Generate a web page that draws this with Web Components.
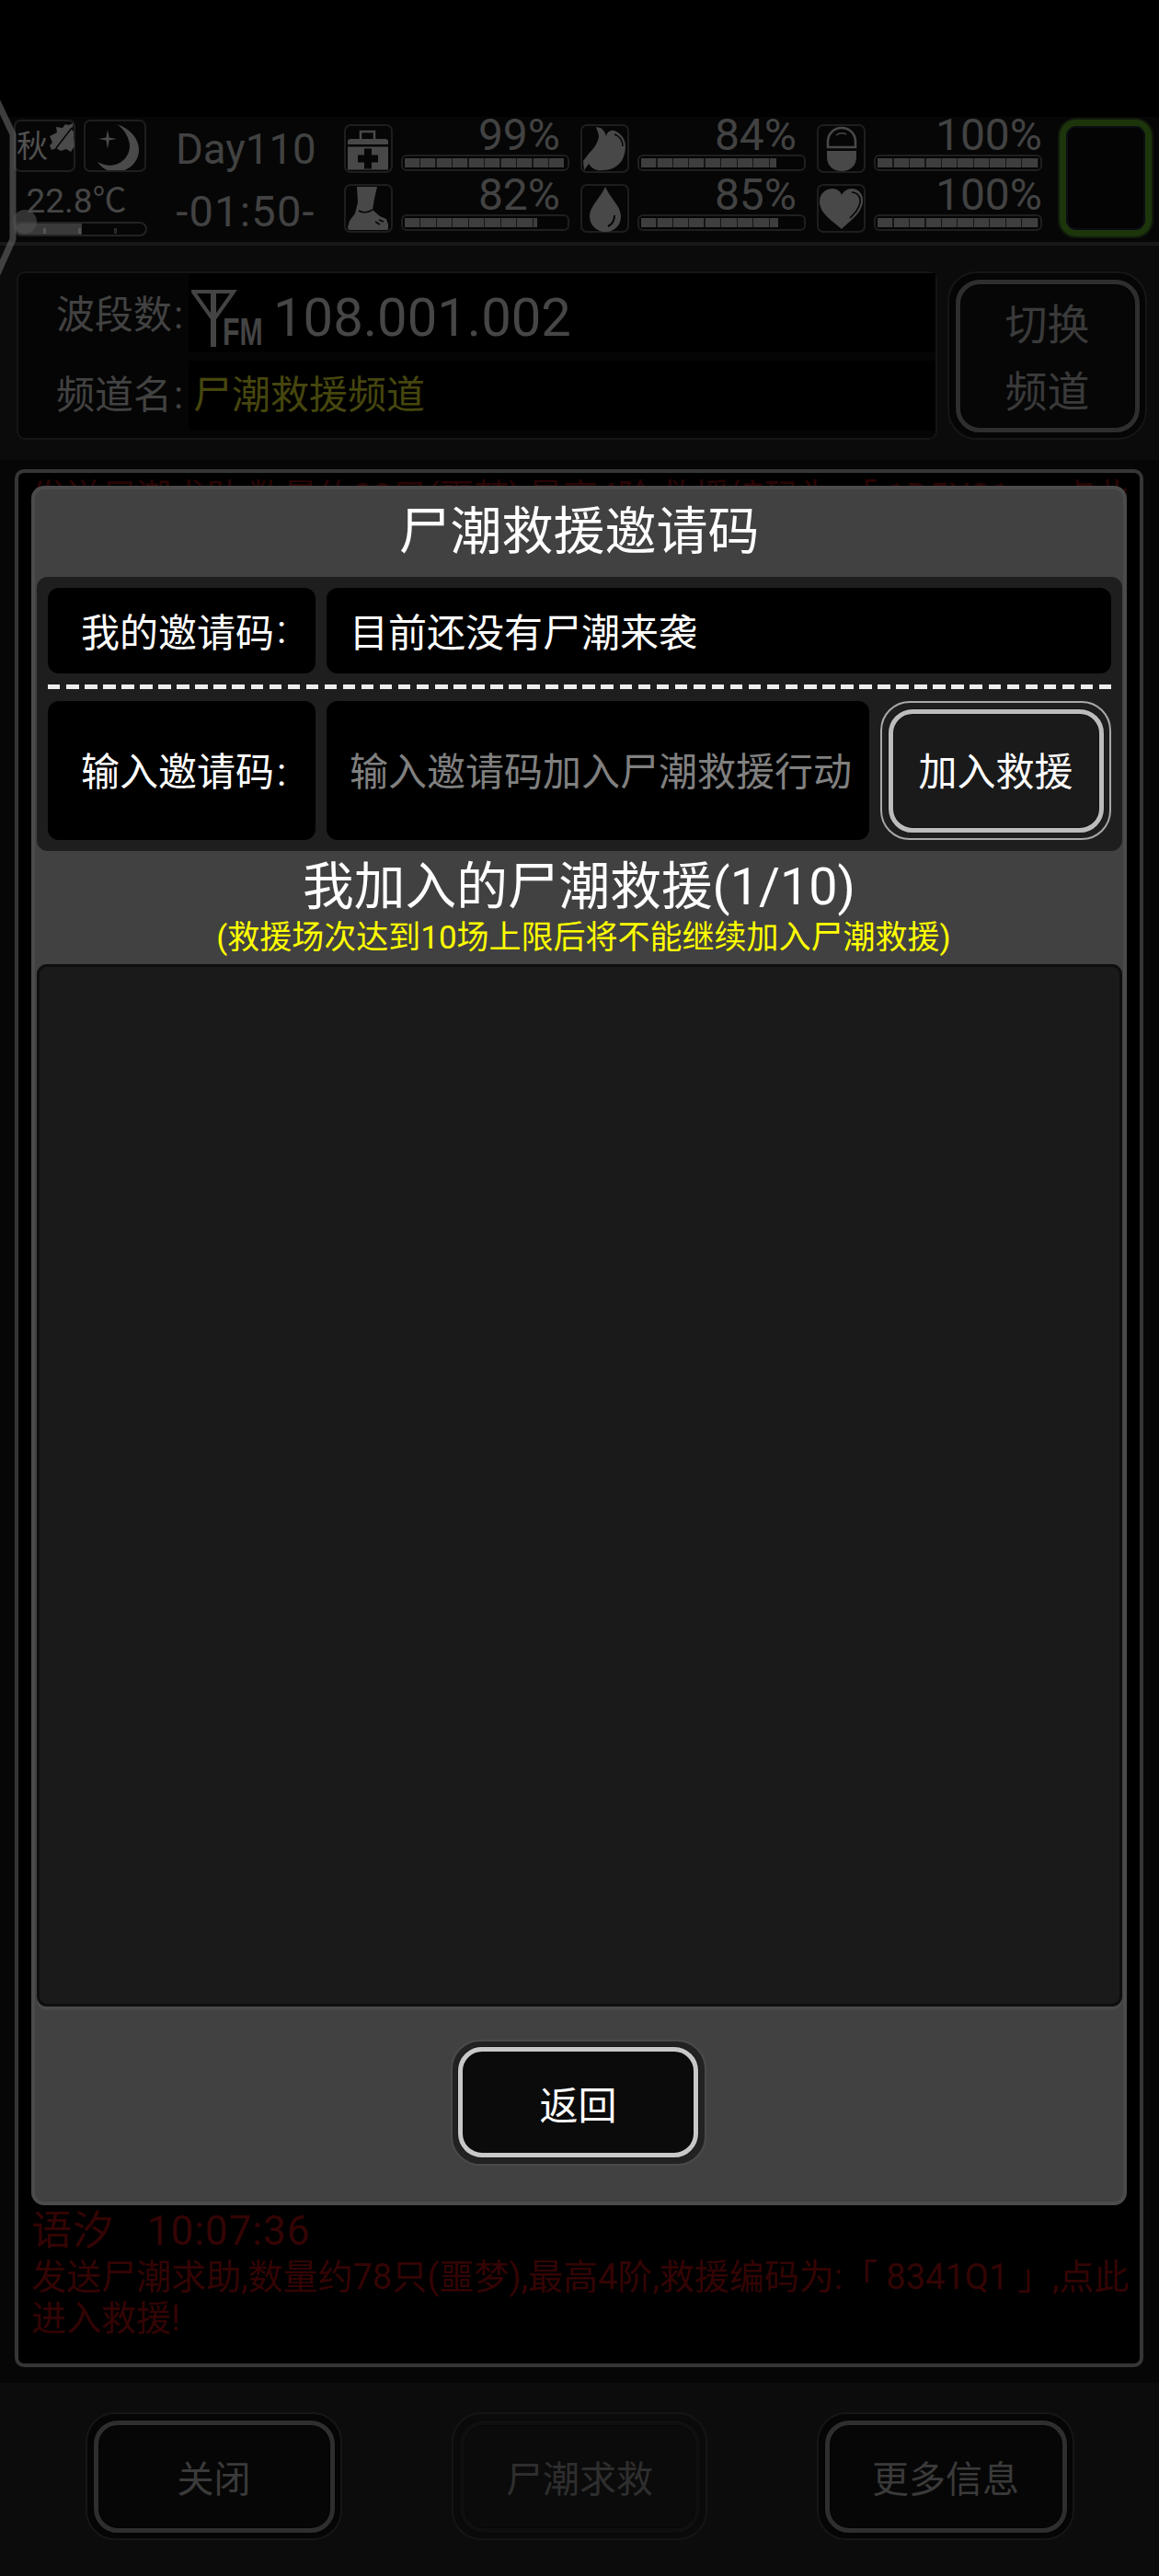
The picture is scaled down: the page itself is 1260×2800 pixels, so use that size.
<!DOCTYPE html>
<html lang="zh">
<head>
<meta charset="utf-8">
<title>尸潮救援邀请码</title>
<style>
  html, body { margin: 0; background: #000; }
  body { font-family: Roboto, "Noto Sans CJK SC", sans-serif; width: 1260px; height: 2800px; overflow: hidden; }
</style>
</head>
<body>
<game-screen>
  <status-bar slot="status">
    <env-panel slot="env"></env-panel>
    <day-clock slot="day" day="Day110" time="-01:50-"></day-clock>
    <stat-meter slot="stats" value="99" icon="medkit"></stat-meter>
    <stat-meter slot="stats" value="84" icon="stomach"></stat-meter>
    <stat-meter slot="stats" value="100" icon="pill" flush></stat-meter>
    <stat-meter slot="stats" value="82" icon="foot"></stat-meter>
    <stat-meter slot="stats" value="85" icon="drop"></stat-meter>
    <stat-meter slot="stats" value="100" icon="heart" flush></stat-meter>
  </status-bar>
  <channel-panel slot="channel" band="108.001.002" name="尸潮救援频道"></channel-panel>
  <log-frame slot="log">
    <span slot="clipped">发送尸潮求助,数量约80只(噩梦),最高4阶,救援编码为:「 1D5X01 」,点此进入救援!</span>
    <span slot="who">语汐&nbsp;&nbsp;&nbsp;10:07:36</span>
    <span slot="msg">发送尸潮求助,数量约78只(噩梦),最高4阶,救援编码为:「 8341Q1 」,点此<br>进入救援!</span>
    <invite-modal slot="modal"></invite-modal>
  </log-frame>
  <action-bar slot="actions">
    <ring-button tone="dim" style="width:279px;height:139px">关闭</ring-button>
    <ring-button tone="off" style="width:278px;height:139px">尸潮求救</ring-button>
    <ring-button tone="dim" style="width:280px;height:139px">更多信息</ring-button>
  </action-bar>
</game-screen>

<script>
const ICONS = {
  medkit: `<path d="M18 16V8h15v8" fill="none" stroke="currentColor" stroke-width="2.6"/>
    <path d="M4 22v-3q0-3 3-3h38q3 0 3 3v3z"/>
    <path fill-rule="evenodd" d="M4 24h44v25H4zM22 26v7h-7v8h7v7h8v-7h7v-8h-7v-7z" transform="translate(0 .5)"/>`,
  foot: `<path d="M14 3h22l-3 13-2 12 8 7 7 3 2 6v5q0 1-2 1H7q-3 0-3-3l2-7 6-8 3-12z"/>
    <path d="M16 29q7 4 15-1M38 39l5 2M34 41l5 3" fill="none" stroke="#060606" stroke-width="1.6"/>`,
  stomach: `<path d="M17 3c1 4 3 7 3 11-2 8-6 13-11 18l-6 8 1 10 5-7c4 6 9 8 15 7 12 0 21-6 24-18 3-12-1-21-11-25-4-1-8 1-9 6-1-4-3-7-6-9z"/>
    <path d="M37 11c6 2 9 7 9 13" fill="none" stroke="#060606" stroke-width="1.6"/>`,
  drop: `<path d="M27 3c-5 12-17 21-17 32 0 10 8 17 17 17 10 0 17-7 17-17C44 24 32 15 27 3z"/>
    <path d="M37 34c0 6-3 10-7 12" fill="none" stroke="#060606" stroke-width="2"/>`,
  pill: `<path d="M12 25v-6C12 10 19 4 27 4s15 6 15 15v6z" fill="none" stroke="currentColor" stroke-width="2.6"/>
    <path d="M11 29h32v7c0 9-7 15-16 15s-16-6-16-15z"/>
    <path d="M21 12q5-4 11-1" fill="none" stroke="currentColor" stroke-width="1.5"/>`,
  heart: `<path d="M27 49C17 40 3 32 3 19 3 10 10 5 17 5c5 0 9 3 10 7 2-4 6-7 11-7 7 0 13 6 12 14-1 13-14 21-23 30z"/>
    <path d="M38 9c6 0 10 5 9 11-1 7-6 12-11 17" fill="none" stroke="#060606" stroke-width="1.6"/>`
};

class GameScreen extends HTMLElement {
  constructor() {
    super();
    this.attachShadow({ mode: 'open' }).innerHTML = `
      <style>
        :host { display: flex; flex-direction: column; position: relative; width: 1260px; height: 2800px; background: #000; padding-top: 127px; box-sizing: border-box; overflow: hidden; }
        svg { position: absolute; left: 0; top: 100px; pointer-events: none; }
      </style>
      <slot name="status"></slot>
      <slot name="channel"></slot>
      <slot name="log"></slot>
      <slot name="actions"></slot>
      <svg width="40" height="210" viewBox="0 0 40 210">
        <path d="M-4 8 L14 46 V160 L-4 200" fill="none" stroke="rgba(112,112,112,.55)" stroke-width="7"/>
        <circle cx="27" cy="141" r="13" fill="rgba(80,80,80,.6)"/>
      </svg>`;
  }
}

class StatusBar extends HTMLElement {
  constructor() {
    super();
    this.attachShadow({ mode: 'open' }).innerHTML = `
      <style>
        :host { display: flex; height: 140px; background: #060606; box-sizing: border-box; padding: 3px 8px 0 15px; border-bottom: 4px solid #181818; }
        .day { width: 214px; display: block; }
        .stats { display: grid; grid-template-columns: repeat(3, 245px); grid-auto-rows: 53px; gap: 12px; column-gap: 12px; padding-top: 5px; width: 759px; }
        .power { margin-left: 19px; width: 100px; height: 127px; box-sizing: border-box; border: 7px solid #1c350b; border-radius: 18px; background: #040404; box-shadow: 0 0 0 2px #121a0c, inset 0 0 0 2px #0c0c14; }
      </style>
      <slot name="env"></slot>
      <div class="day"><slot name="day"></slot></div>
      <div class="stats"><slot name="stats"></slot></div>
      <div class="power"></div>`;
  }
}

class EnvPanel extends HTMLElement {
  constructor() {
    super();
    this.attachShadow({ mode: 'open' }).innerHTML = `
      <style>
        :host { display: flex; flex-direction: column; width: 145px; color: #454545; }
        .top { display: flex; gap: 9px; }
        .box { height: 57px; box-sizing: border-box; border: 2px solid #1e1e1e; border-radius: 7px; position: relative; display: flex; }
        .season { width: 67px; align-items: center; font-size: 34px; line-height: 1; padding-left: 1px; color: #505050; }
        .moon { width: 68px; }
        svg { fill: #4a4a4a; position: absolute; left: 0; top: 0; }
        .temp { font-size: 37px; line-height: 27px; text-align: center; height: 36px; margin: 18px 9px 0 0; white-space: nowrap; }
        .bar { height: 16px; box-sizing: border-box; border: 2px solid #222; border-radius: 8px; background: #060606; overflow: hidden; display: flex; position: relative; }
        .bar i { width: 72px; background: #3a3a3a; }
        .bar b { position: absolute; bottom: 1px; width: 3px; height: 6px; background: #555; }
      </style>
      <div class="top">
        <div class="box season">秋
          <svg width="65" height="53" viewBox="0 0 65 53"><path d="M37 16l8-4-1-6 7 1 3-4 3 1 6-2-2 7 2 2v7l1 9-4 6-5-3-6 2-5-3-5 2-2-5 3-3z"/><path d="M44 29L61 7" stroke="#060606" stroke-width="1.5"/></svg>
        </div>
        <div class="box moon">
          <svg width="64" height="53" viewBox="0 0 64 53"><path d="M34 3c16 5 24 17 24 28 0 15-14 24-25 24-9 0-16-5-20-11 7 4 15 5 22 2 11-5 15-16 12-25-2-8-7-14-13-18z"/><path d="M24 9l1.600 8.600 8.400 1.400-8.400 1.400L24 30l-1.600-9.600-8.400-1.400 8.400-1.400z"/></svg>
        </div>
      </div>
      <div class="temp">22.8℃</div>
      <div class="bar"><i></i><b style="left:30px"></b><b style="left:68px"></b><b style="left:107px;background:#2a2a2a"></b></div>`;
  }
}

class DayClock extends HTMLElement {
  constructor() {
    super();
    const day = this.getAttribute('day'), time = this.getAttribute('time');
    this.attachShadow({ mode: 'open' }).innerHTML = `
      <style>
        :host { display: flex; flex-direction: column; color: #424242; font-size: 45.500px; text-align: center; line-height: 46px; padding: 10px 0 0 31px; width: 152px; white-space: nowrap; }
        div + div { margin-top: 21px; font-size: 47px; letter-spacing: 1.200px; }
      </style>
      <div>${day}</div><div>${time}</div>`;
  }
}

class StatMeter extends HTMLElement {
  constructor() {
    super();
    const v = Number(this.getAttribute('value'));
    const flush = this.hasAttribute('flush');
    this.attachShadow({ mode: 'open' }).innerHTML = `
      <style>
        :host { display: flex; gap: 9px; height: 53px; color: #484848; }
        .ico { width: 53px; height: 53px; flex: none; box-sizing: border-box; border: 2px solid #1e1e1e; border-radius: 7px; position: relative; }
        svg { position: absolute; left: -2px; top: -2px; fill: currentColor; }
        .col { flex: 1; display: flex; flex-direction: column; min-width: 0; }
        .pct { font-size: 48px; line-height: 24px; height: 33px; text-align: right; padding-right: ${flush ? 0 : 10}px; color: #424242; }
        .bar { height: 18px; box-sizing: border-box; border: 2px solid #1f1f1f; border-radius: 6px; background: #050505; padding: 2px; }
        .fill { height: 100%; width: ${v}%; background: repeating-linear-gradient(90deg, #3e3e3e 0 16px, #161616 16px 17.500px); }
      </style>
      <div class="ico"><svg width="53" height="53" viewBox="0 0 53 53">${ICONS[this.getAttribute('icon')]}</svg></div>
      <div class="col">
        <div class="pct">${v}%</div>
        <div class="bar"><div class="fill"></div></div>
      </div>`;
  }
}

class ChannelPanel extends HTMLElement {
  constructor() {
    super();
    this.attachShadow({ mode: 'open' }).innerHTML = `
      <style>
        :host { display: flex; height: 233px; box-sizing: border-box; padding: 28px 13px 0 18px; background: #0b0b0b; gap: 11px; align-items: flex-start; }
        .box { width: 1001px; height: 183px; box-sizing: border-box; border: 2px solid #151515; border-radius: 9px; background: #050505; padding: 0 0 0 41px; display: grid; grid-template-columns: 144px 1fr; grid-template-rows: 86px 76px; row-gap: 9px; align-items: center; }
        .lab { font-size: 42px; color: #424242; line-height: 1; white-space: nowrap; }
        .lab i { font-style: normal; margin-left: 2px; }
        .lab.up { position: relative; top: 3px; }
        .val { height: 100%; background: #000; display: flex; align-items: center; }
        .band { font-size: 58px; color: #464646; line-height: 1; position: relative; top: 5px; }
        .name { font-size: 42px; color: #46460e; line-height: 1; padding-left: 5px; }
        .fm { position: relative; width: 92px; height: 86px; flex: none; color: #444; }
        .fm svg { position: absolute; left: 3px; top: 17px; }
        .fm b { position: absolute; left: 37px; top: 43px; font: 700 42px/1 "Liberation Sans", sans-serif; transform: scaleX(.72); transform-origin: left top; }
        ring-button { font-size: 46px; line-height: 73px; }
      </style>
      <div class="box">
        <div class="lab up">波段数<i>:</i></div>
        <div class="val">
          <div class="fm"><svg width="50" height="66" viewBox="0 0 50 66" fill="none" stroke="currentColor" stroke-width="4"><path d="M2 3h44L24 34z"/><path d="M24 1v62" stroke-width="6"/></svg><b>FM</b></div>
          <div class="band">${this.getAttribute('band')}</div>
        </div>
        <div class="lab">频道名<i>:</i></div>
        <div class="val"><div class="name">${this.getAttribute('name')}</div></div>
      </div>
      <ring-button tone="dim" style="width:217px;height:183px"><span style="position:relative;top:3px">切换<br>频道</span></ring-button>`;
  }
}

class LogFrame extends HTMLElement {
  constructor() {
    super();
    this.attachShadow({ mode: 'open' }).innerHTML = `
      <style>
        :host { display: block; background: #060606; padding: 10px 17px 17px 16px; height: 2090px; box-sizing: border-box; }
        .frame { position: relative; height: 2063px; box-sizing: border-box; border: 4px solid #363636; border-radius: 10px; background: #000; padding: 4px 14px 0; display: flex; flex-direction: column; overflow: hidden; }
        .clip { color: #2a0404; font-size: 38px; line-height: 44px; white-space: nowrap; overflow: hidden; height: 44px; }
        .bottom { margin-top: auto; padding-bottom: 26px; color: #340404; }
        .who { font-size: 44px; line-height: 52px; letter-spacing: 1px; }
        .msg { font-size: 38px; line-height: 45px; white-space: nowrap; margin-top: 2px; }
        ::slotted(invite-modal) { position: absolute; left: 14px; right: 14px; top: 14px; bottom: 172px; }
      </style>
      <div class="frame">
        <div class="clip"><slot name="clipped"></slot></div>
        <div class="bottom">
          <div class="who"><slot name="who"></slot></div>
          <div class="msg"><slot name="msg"></slot></div>
        </div>
        <slot name="modal"></slot>
      </div>`;
  }
}

class InviteModal extends HTMLElement {
  constructor() {
    super();
    this.attachShadow({ mode: 'open' }).innerHTML = `
      <style>
        :host { display: flex; flex-direction: column; box-sizing: border-box; border: 4px solid #4b4b4b; border-radius: 14px; background: #414141; color: #fff; }
        .title { height: 95px; flex: none; font-size: 56px; line-height: 93px; text-align: center; }
        .block { flex: none; margin: 0 1px 0 2px; padding: 12px; background: #1e1e1e; border-radius: 12px; }
        .row { display: grid; grid-template-columns: 291px 1fr; gap: 12px; font-size: 42px; }
        .row > div { background: #000; border-radius: 12px; display: flex; align-items: center; }
        .row .lab { padding-left: 36px; }
        .row .lab i { font-style: normal; margin-left: 3px; }
        .row .val { padding-left: 25px; }
        .one { height: 93px; }
        .one > div { padding-bottom: 2px; box-sizing: border-box; }
        .two { height: 151px; grid-template-columns: 291px 590px 251px; }
        .two .val { color: #808080; }
        .two .val span, .two .lab span { position: relative; top: -2px; }
        .row ring-button { background: none; font-size: 42px; }
        .row ring-button span { position: relative; top: -2px; }
        .dash { height: 5px; margin: 12px 0 13px; background: repeating-linear-gradient(90deg, #eee 0 13.500px, transparent 13.500px 20.050px); }
        .head { flex: none; height: 123px; padding-top: 9px; box-sizing: border-box; text-align: center; }
        .head h2 { margin: 0; font-size: 55.700px; font-weight: 400; line-height: 60px; }
        .head p { margin: 0; color: #ff0; font-size: 35px; line-height: 52px; padding-left: 10px; }
        .list { flex: 1; margin: 0 1px 0 2px; background: #1a1a1a; border: 3px solid #0e0e0e; border-radius: 11px; box-shadow: 0 4px 0 #4a4a4a; }
        .foot { height: 212px; flex: none; display: flex; justify-content: center; align-items: center; box-sizing: border-box; padding: 0 2px 4px 0; }
      </style>
      <div class="title">尸潮救援邀请码</div>
      <div class="block">
        <div class="row one">
          <div class="lab">我的邀请码<i>:</i></div>
          <div class="val">目前还没有尸潮来袭</div>
        </div>
        <div class="dash"></div>
        <div class="row two">
          <div class="lab"><span>输入邀请码<i>:</i></span></div>
          <div class="val"><span>输入邀请码加入尸潮救援行动</span></div>
          <ring-button tone="join" style="width:251px;height:151px"><span>加入救援</span></ring-button>
        </div>
      </div>
      <div class="head">
        <h2>我加入的尸潮救援(1/10)</h2>
        <p>(救援场次达到10场上限后将不能继续加入尸潮救援)</p>
      </div>
      <div class="list"></div>
      <div class="foot">
        <ring-button tone="back" style="width:278px;height:137px;font-size:42px">返回</ring-button>
      </div>`;
  }
}

class RingButton extends HTMLElement {
  constructor() {
    super();
    const tones = {
      dim:  'border:2px solid #161616;background:#050505;--edge:#2e2e2e;--face:#060606;color:#3a3a3a;',
      off:  'border:2px solid #151515;background:#0a0a0a;--edge:#0f0f0f;--face:#0b0b0b;color:#2e2e2e;',
      join: 'border:2px solid #a8a8a8;background:#1a1a1a;--edge:#bcbcbc;--face:#1a1a1a;color:#fff;',
      back: 'border:2px solid #4a4a4a;background:#222;--edge:#c8c8c8;--face:#0b0b0b;color:#fff;'
    };
    this.attachShadow({ mode: 'open' }).innerHTML = `
      <style>
        :host { display: block; flex: none; box-sizing: border-box; padding: 6.500px; border-radius: 32px; font-size: 40px; ${tones[this.getAttribute('tone')]} }
        .face { height: 100%; box-sizing: border-box; border: 5px solid var(--edge); border-radius: 26px; background: var(--face); display: flex; align-items: center; justify-content: center; text-align: center; box-shadow: inset 0 0 0 1px rgba(0,0,0,.35), 0 0 0 1px rgba(0,0,0,.25); }
      </style>
      <div class="face"><div><slot></slot></div></div>`;
  }
}

class ActionBar extends HTMLElement {
  constructor() {
    super();
    this.attachShadow({ mode: 'open' }).innerHTML = `
      <style>
        :host { display: flex; flex: 1; background: #0c0c0c; padding: 32px 92px 0 93px; justify-content: space-between; align-items: flex-start; box-sizing: border-box; }
      </style>
      <slot></slot>`;
  }
}

customElements.define('ring-button', RingButton);
customElements.define('stat-meter', StatMeter);
customElements.define('env-panel', EnvPanel);
customElements.define('day-clock', DayClock);
customElements.define('status-bar', StatusBar);
customElements.define('channel-panel', ChannelPanel);
customElements.define('invite-modal', InviteModal);
customElements.define('log-frame', LogFrame);
customElements.define('action-bar', ActionBar);
customElements.define('game-screen', GameScreen);
</script>
</body>
</html>
